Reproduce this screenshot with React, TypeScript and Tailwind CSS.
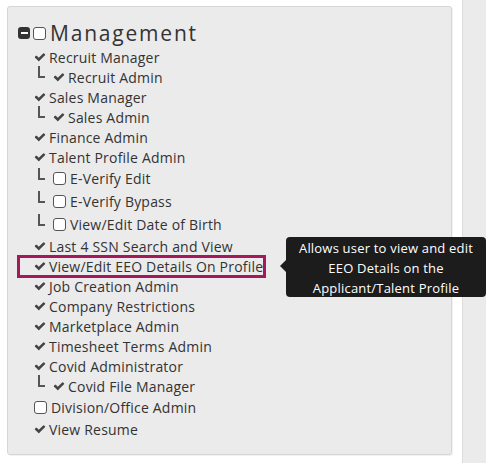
import React from 'react'

type Perm = {
  label: string
  kind: 'check' | 'box'
  children?: Perm[]
  highlight?: boolean
}

const perms: Perm[] = [
  { label: 'Recruit Manager', kind: 'check', children: [{ label: 'Recruit Admin', kind: 'check' }] },
  { label: 'Sales Manager', kind: 'check', children: [{ label: 'Sales Admin', kind: 'check' }] },
  { label: 'Finance Admin', kind: 'check' },
  {
    label: 'Talent Profile Admin',
    kind: 'check',
    children: [
      { label: 'E-Verify Edit', kind: 'box' },
      { label: 'E-Verify Bypass', kind: 'box' },
      { label: 'View/Edit Date of Birth', kind: 'box' },
    ],
  },
  { label: 'Last 4 SSN Search and View', kind: 'check' },
  { label: 'View/Edit EEO Details On Profile', kind: 'check', highlight: true },
  { label: 'Job Creation Admin', kind: 'check' },
  { label: 'Company Restrictions', kind: 'check' },
  { label: 'Marketplace Admin', kind: 'check' },
  { label: 'Timesheet Terms Admin', kind: 'check' },
  { label: 'Covid Administrator', kind: 'check', children: [{ label: 'Covid File Manager', kind: 'check' }] },
  { label: 'Division/Office Admin', kind: 'box' },
  { label: 'View Resume', kind: 'check' },
]

function Check() {
  return (
    <svg width="12" height="12" viewBox="0 0 1792 1792" className="shrink-0 mr-[3px]">
      <path
        fill="#444"
        d="M1671 566q0 40-28 68l-724 724-136 136q-28 28-68 28t-68-28l-136-136-362-362q-28-28-28-68t28-68l136-136q28-28 68-28t68 28l294 295 656-657q28-28 68-28t68 28l136 136q28 28 28 68z"
      />
    </svg>
  )
}

function Box() {
  return <span className="shrink-0 w-[13px] h-[13px] rounded-[3px] border border-[#555] bg-white mr-[4px]" />
}

function Row({ p, child }: { p: Perm; child?: boolean }) {
  return (
    <div className={`relative flex items-center ${p.kind === 'box' ? 'h-[23px]' : 'h-[20px]'}`}>
      {child && (
        <span className="w-[7px] h-[12px] -mt-[10px] ml-[4px] mr-[8px] border-l-2 border-b-2 border-[#555] shrink-0" />
      )}
      {p.kind === 'check' ? <Check /> : <Box />}
      <span className="whitespace-nowrap">{p.label}</span>
      {p.highlight && (
        <span className="absolute left-[-17px] w-[249px] top-[-1px] h-[23px] border-[3px] border-[#a3195b]" />
      )}
    </div>
  )
}

export default function App() {
  return (
    <div
      className="relative w-[486px] h-[463px] flex bg-white text-[#333] overflow-hidden"
      style={{ fontFamily: '"Open Sans", "Liberation Sans", sans-serif' }}
    >
      <div className="w-[462px] shrink-0 pl-[7px] pt-[6px]">
        <div className="w-[445px] h-[449px] bg-[#ebebeb] border border-[#d6d6d6] rounded-[3px] shadow-[1px_1px_1px_rgba(0,0,0,0.06)] pl-[10px] pt-[12px]">
          <div className="flex items-center h-[28px]">
            <span className="w-[12px] h-[12px] rounded-[3px] bg-[#333] flex items-center justify-center mr-[3px]">
              <span className="w-[7px] h-[2px] bg-white" />
            </span>
            <span className="w-[13px] h-[13px] rounded-[3px] border border-[#555] bg-white mr-[4px]" />
            <span className="text-[21px] leading-none tracking-[1.8px]">Management</span>
          </div>
          <div className="ml-[16px] text-[14px] tracking-[0.2px]">
            {perms.map((p) => (
              <div key={p.label}>
                <Row p={p} />
                {p.children?.map((c) => <Row key={c.label} p={c} child />)}
              </div>
            ))}
          </div>
        </div>
      </div>
      <div className="flex-1 border-l border-[#dcdcdc] bg-[#ebebeb]" />

      <div className="absolute left-[286px] top-[237px] w-[200px] h-[60px] bg-[#1c1c1c] rounded-[4px] text-white text-[13px] font-medium tracking-[0.2px] leading-[20px] text-center pt-[1px]">
        <span className="absolute left-[-6px] top-[23px] w-0 h-0 border-y-[6px] border-y-transparent border-r-[6px] border-r-[#1c1c1c]" />
        <div>Allows user to view and edit</div>
        <div>EEO Details on the</div>
        <div>Applicant/Talent Profile</div>
      </div>
    </div>
  )
}
